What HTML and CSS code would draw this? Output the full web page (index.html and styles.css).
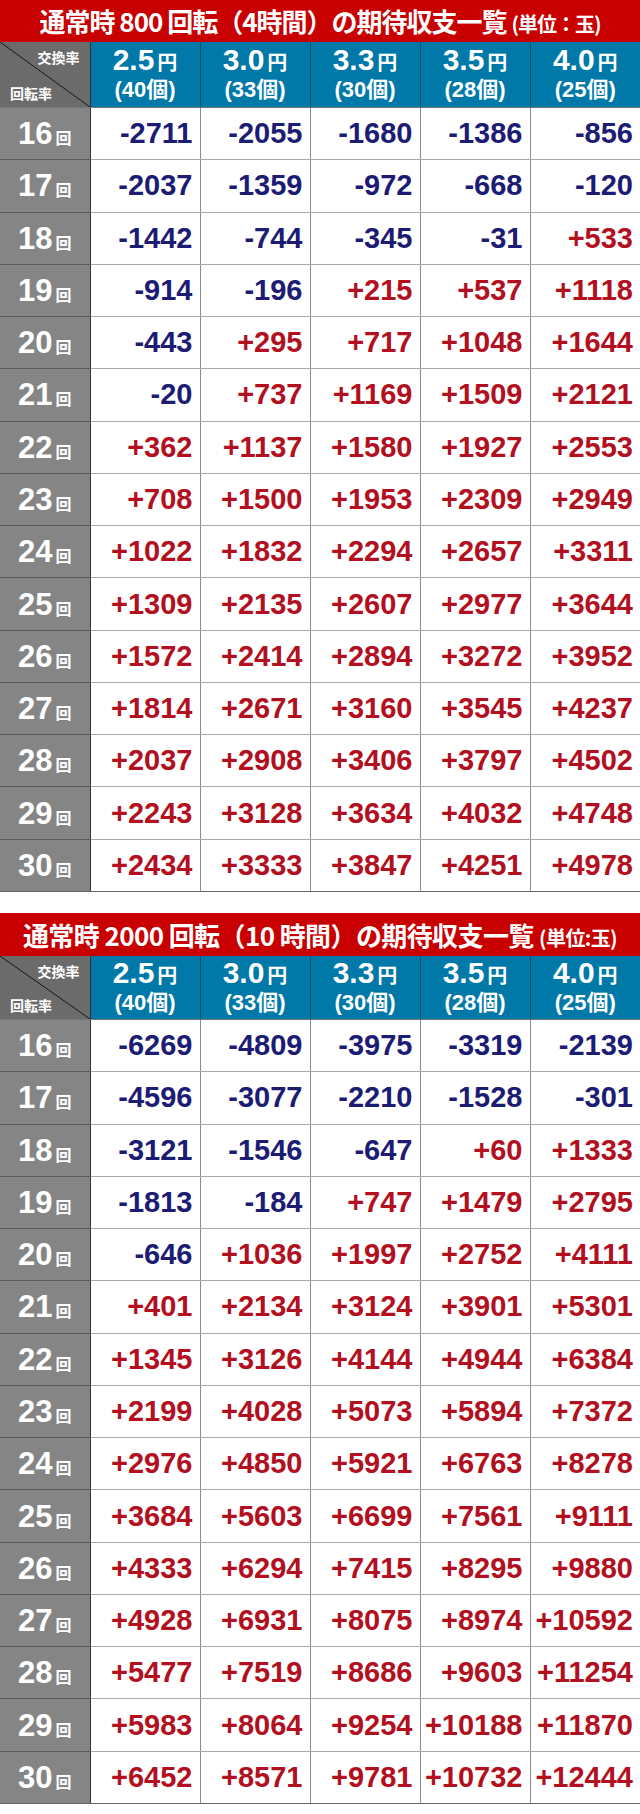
FILE: index.html
```html
<!DOCTYPE html>
<html lang="ja">
<head>
<meta charset="utf-8">
<title>期待収支一覧</title>
<link rel="stylesheet" href="styles.css">
</head>
<body>
<div class="page">
  <section class="block">
    <h2 class="title">通常時 800 回転（4時間）の期待収支一覧 <span class="unit">(単位：玉)</span></h2>
    <table class="grid">
      <colgroup><col class="c0"><col class="cx"><col class="cx"><col class="cx"><col class="cx"><col class="cx"></colgroup>
      <thead>
        <tr>
          <th class="corner"><div class="corner-in"><span class="rx">交換率</span><span class="ry">回転率</span></div></th>
          <th class="yen"><div><span class="big">2.5</span><span class="en">円</span></div><div class="pcs">(40個)</div></th>
          <th class="yen"><div><span class="big">3.0</span><span class="en">円</span></div><div class="pcs">(33個)</div></th>
          <th class="yen"><div><span class="big">3.3</span><span class="en">円</span></div><div class="pcs">(30個)</div></th>
          <th class="yen"><div><span class="big">3.5</span><span class="en">円</span></div><div class="pcs">(28個)</div></th>
          <th class="yen"><div><span class="big">4.0</span><span class="en">円</span></div><div class="pcs">(25個)</div></th>
        </tr>
      </thead>
      <tbody id="t1"></tbody>
    </table>
  </section>
  <section class="block second">
    <h2 class="title">通常時 2000 回転（10 時間）の期待収支一覧 <span class="unit">(単位:玉)</span></h2>
    <table class="grid">
      <colgroup><col class="c0"><col class="cx"><col class="cx"><col class="cx"><col class="cx"><col class="cx"></colgroup>
      <thead>
        <tr>
          <th class="corner"><div class="corner-in"><span class="rx">交換率</span><span class="ry">回転率</span></div></th>
          <th class="yen"><div><span class="big">2.5</span><span class="en">円</span></div><div class="pcs">(40個)</div></th>
          <th class="yen"><div><span class="big">3.0</span><span class="en">円</span></div><div class="pcs">(33個)</div></th>
          <th class="yen"><div><span class="big">3.3</span><span class="en">円</span></div><div class="pcs">(30個)</div></th>
          <th class="yen"><div><span class="big">3.5</span><span class="en">円</span></div><div class="pcs">(28個)</div></th>
          <th class="yen"><div><span class="big">4.0</span><span class="en">円</span></div><div class="pcs">(25個)</div></th>
        </tr>
      </thead>
      <tbody id="t2"></tbody>
    </table>
  </section>
</div>
<script src="app.js"></script>
</body>
</html>
```
FILE: app.js
```js
var d1 = [
  [-2711,-2055,-1680,-1386,-856],
  [-2037,-1359,-972,-668,-120],
  [-1442,-744,-345,-31,533],
  [-914,-196,215,537,1118],
  [-443,295,717,1048,1644],
  [-20,737,1169,1509,2121],
  [362,1137,1580,1927,2553],
  [708,1500,1953,2309,2949],
  [1022,1832,2294,2657,3311],
  [1309,2135,2607,2977,3644],
  [1572,2414,2894,3272,3952],
  [1814,2671,3160,3545,4237],
  [2037,2908,3406,3797,4502],
  [2243,3128,3634,4032,4748],
  [2434,3333,3847,4251,4978]
];
var d2 = [
  [-6269,-4809,-3975,-3319,-2139],
  [-4596,-3077,-2210,-1528,-301],
  [-3121,-1546,-647,60,1333],
  [-1813,-184,747,1479,2795],
  [-646,1036,1997,2752,4111],
  [401,2134,3124,3901,5301],
  [1345,3126,4144,4944,6384],
  [2199,4028,5073,5894,7372],
  [2976,4850,5921,6763,8278],
  [3684,5603,6699,7561,9111],
  [4333,6294,7415,8295,9880],
  [4928,6931,8075,8974,10592],
  [5477,7519,8686,9603,11254],
  [5983,8064,9254,10188,11870],
  [6452,8571,9781,10732,12444]
];
function fill(id, data) {
  var tb = document.getElementById(id);
  var html = '';
  for (var i = 0; i < data.length; i++) {
    html += '<tr><th class="spin"><span class="n">' + (16 + i) + '</span><span class="kai">回</span></th>';
    for (var j = 0; j < data[i].length; j++) {
      var v = data[i][j];
      html += '<td class="' + (v < 0 ? 'neg' : 'pos') + '">' + (v < 0 ? '-' + (-v) : '+' + v) + '</td>';
    }
    html += '</tr>';
  }
  tb.innerHTML = html;
}
fill('t1', d1);
fill('t2', d2);
```
FILE: styles.css
```css
body {
  margin: 0;
  background: #fff;
  font-family: "Liberation Sans", "Noto Sans CJK JP", sans-serif;
}
.page {
  width: 640px;
}
.block.second {
  margin-top: 21px;
}
.title {
  margin: 0;
  height: 42px;
  background: #c90000;
  color: #fff;
  font: 700 26px/42px "Noto Sans CJK JP", sans-serif;
  text-align: center;
  white-space: nowrap;
  letter-spacing: -1px;
}
.second .title {
  height: 43px;
  line-height: 43px;
  letter-spacing: -0.6px;
}
.unit {
  font-size: 20px;
}
.grid {
  border-collapse: collapse;
  table-layout: fixed;
  width: 640px;
}
.c0 { width: 90px; }
.cx { width: 110px; }
thead th {
  height: 65px;
  padding: 0;
  background: #0079a8;
  color: #fff;
  border-right: 1px solid #1b4b62;
  border-bottom: 1px solid #777;
  vertical-align: middle;
}
.second thead th {
  height: 63px;
}
thead th:last-child {
  border-right: 0;
}
.corner {
  background: linear-gradient(to top right, #6b6b6b calc(50% - 0.8px), #151515 50%, #6b6b6b calc(50% + 0.8px));
  border-right: 1px solid #333 !important;
}
.corner-in {
  display: flex;
  flex-direction: column;
  justify-content: space-between;
  height: 100%;
  padding: 6px 10px 5px 10px;
  box-sizing: border-box;
  font: 700 14px/18px "Noto Sans CJK JP", sans-serif;
}
.rx { align-self: flex-end; }
.ry { align-self: flex-start; }
.yen {
  line-height: 1;
}
.big {
  font: 700 30px/28px "Liberation Sans", sans-serif;
}
.en {
  font: 700 20px/28px "Noto Sans CJK JP", sans-serif;
  margin-left: 3px;
}
.pcs {
  font: 700 22px/26px "Liberation Sans", "Noto Sans CJK JP", sans-serif;
  margin-top: 1px;
}
tbody tr {
  height: 52.27px;
}
.spin {
  padding: 0;
  background: #858585;
  color: #fff;
  border-right: 1px solid #333;
  border-bottom: 1px solid #5a5a5a;
  text-align: center;
  white-space: nowrap;
}
.n {
  font: 700 31px/1 "Liberation Sans", sans-serif;
}
.kai {
  font: 700 16px/1 "Noto Sans CJK JP", sans-serif;
  margin-left: 3px;
}
tbody td {
  padding: 0 7px 0 0;
  text-align: right;
  border-right: 1px solid #8a8a8a;
  border-bottom: 1px solid #a8a8a8;
  font: 700 29px/1 "Liberation Sans", sans-serif;
  white-space: nowrap;
}
tbody td:last-child {
  border-right: 0;
}
tbody tr:last-child td,
tbody tr:last-child th {
  border-bottom: 1px solid #666;
}
.neg { color: #1d1c74; }
.pos { color: #b2101f; }
```
